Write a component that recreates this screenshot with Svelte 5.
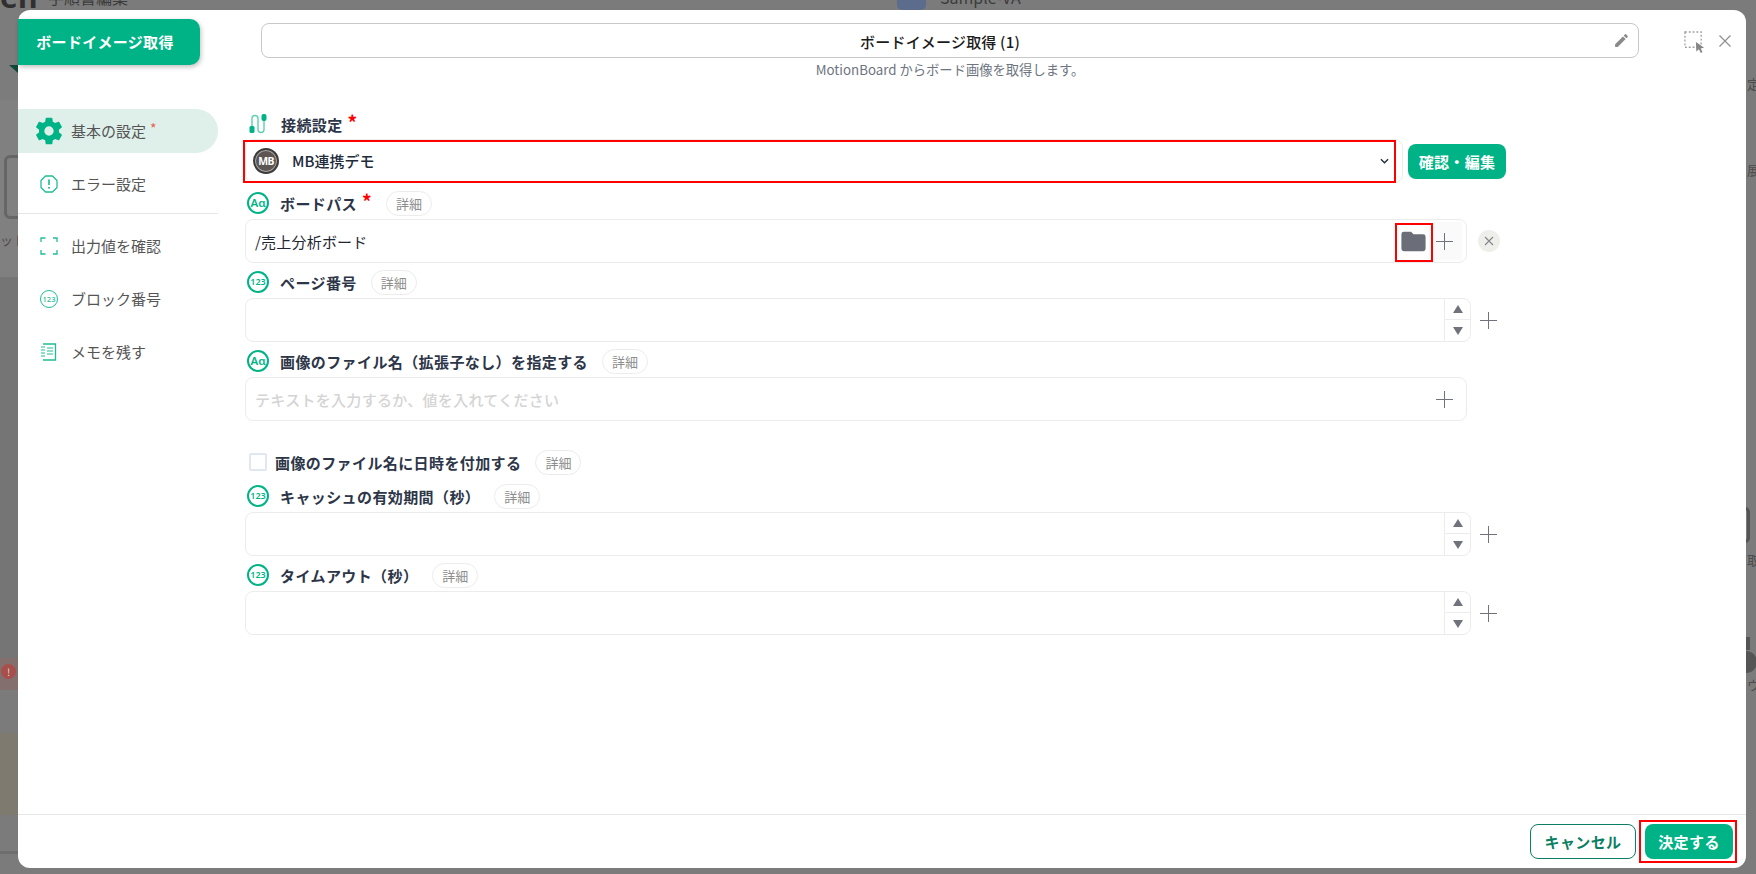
<script lang="ts">
  const sideItems = [
    { id: 'error', label: 'エラー設定' },
    { id: 'output', label: '出力値を確認' },
    { id: 'block', label: 'ブロック番号' },
    { id: 'memo', label: 'メモを残す' }
  ]
</script>

<div class="page">
  <div class="behind">
    <span class="bg-band top-left"></span>
    <span class="bg-band mid-left"></span>
    <span class="bg-band low-left"></span>
    <span class="bg-band band-b"></span>
    <span class="bg-yellow"></span>
    <span class="bg-rule-low"></span>
    <span class="bg-logo">en</span>
    <span class="bg-crumb">手順書編集</span>
    <span class="bg-avatar"></span>
    <span class="bg-flow">Sample-VA</span>
    <span class="bg-tri"></span>
    <span class="bg-bubble"></span>
    <span class="bg-note left">ット</span>
    <span class="bg-note r1">定</span>
    <span class="bg-note r2">展</span>
    <span class="bg-doc"></span>
    <span class="bg-note r3">取</span>
    <span class="bg-lock"></span>
    <span class="bg-round"></span>
    <span class="bg-note r4">ウ</span>
    <span class="bg-err">!</span>
  </div>

  <div class="modal">
    <header class="head">
      <div class="badge">ボードイメージ取得</div>
      <div class="title-col">
        <div class="title-box">
          <span>ボードイメージ取得 (1)</span>
          <svg class="pencil" viewBox="0 0 24 24" aria-hidden="true"><path d="M3 17.25V21h3.75L17.81 9.94l-3.75-3.75L3 17.25zM20.71 7.04a1 1 0 0 0 0-1.41l-2.34-2.34a1 1 0 0 0-1.41 0l-1.83 1.83 3.75 3.75 1.83-1.83z" /></svg>
        </div>
        <p class="subtitle">MotionBoard からボード画像を取得します。</p>
      </div>
      <div class="tools">
        <svg class="select-tool" viewBox="0 0 22 23" aria-hidden="true">
          <rect x="1" y="1" width="17" height="16" fill="none" stroke="#a0a0a0" stroke-width="1.4" stroke-dasharray="2 2" />
          <path d="M12.500 11.500l8.500 6-3.600.9 2 3.600-1.800.9-2-3.700-2.700 2.300z" fill="#858585" />
        </svg>
        <svg class="close-tool" viewBox="0 0 12 12" aria-hidden="true"><path d="M0.500 0.500l11 11M11.500 0.500l-11 11" stroke="#8f8f8f" stroke-width="1.200" fill="none" /></svg>
      </div>
    </header>

    <div class="body">
      <nav class="side">
        <div class="side-item active">
          <svg class="gear" viewBox="0 0 24 24" aria-hidden="true"><path d="M19.43 12.98c.04-.32.07-.64.07-.98s-.03-.66-.07-.98l2.11-1.65c.19-.15.24-.42.12-.64l-2-3.46c-.12-.22-.39-.3-.61-.22l-2.49 1c-.52-.4-1.08-.73-1.69-.98l-.38-2.65A.49.49 0 0 0 14 2h-4c-.25 0-.46.18-.49.42l-.38 2.65c-.61.25-1.17.59-1.69.98l-2.49-1c-.23-.09-.49 0-.61.22l-2 3.46c-.13.22-.07.49.12.64l2.11 1.65c-.04.32-.07.65-.07.98s.03.66.07.98l-2.11 1.65c-.19.15-.24.42-.12.64l2 3.46c.12.22.39.3.61.22l2.49-1c.52.4 1.08.73 1.69.98l.38 2.65c.03.24.24.42.49.42h4c.25 0 .46-.18.49-.42l.38-2.65c.61-.25 1.17-.59 1.69-.98l2.49 1c.23.09.49 0 .61-.22l2-3.46c.12-.22.07-.49-.12-.64l-2.11-1.65zM12 15.500a3.500 3.500 0 1 1 0-7 3.500 3.500 0 0 1 0 7z" /></svg>
          <span>基本の設定</span><i class="side-star">*</i>
        </div>
        {#each sideItems as item (item.id)}
          <div class="side-item {item.id}">
            {#if item.id === 'error'}
              <svg viewBox="0 0 18 18" aria-hidden="true"><path d="M5.500 1h7L17 5.500v7L12.500 17h-7L1 12.500v-7z" fill="none" stroke="#1fbd95" stroke-width="1.300" stroke-linejoin="round" /><path d="M9 4.600v5.400" stroke="#1fbd95" stroke-width="1.700" /><circle cx="9" cy="12.800" r="1" fill="#1fbd95" /></svg>
            {:else if item.id === 'output'}
              <svg viewBox="0 0 18 18" aria-hidden="true"><path d="M1 5V1h4.500M13 1h4v4M17 13v4h-4M5.500 17H1v-4" fill="none" stroke="#1fbd95" stroke-width="1.300" /></svg>
            {:else if item.id === 'block'}
              <span class="num-icon">123</span>
            {:else}
              <svg viewBox="0 0 18 18" aria-hidden="true"><path d="M3 1h12.500v16H3" fill="none" stroke="#1fbd95" stroke-width="1.300" /><path d="M1 4h4M1 7h4M1 10h4M1 13h4M7 5h6M7 8h6M7 11h6" stroke="#1fbd95" stroke-width="1.200" /></svg>
            {/if}
            <span>{item.label}</span>
          </div>
          {#if item.id === 'error'}<hr class="side-rule" />{/if}
        {/each}
      </nav>

      <main class="form">
        <div class="label-row first">
          <svg class="plug" viewBox="0 0 20 22" aria-hidden="true">
            <path d="M4 14V5.500a3 3 0 0 1 6 0v11a3 3 0 0 0 6 0V8" fill="none" stroke="#5fd0b0" stroke-width="1.400" />
            <rect x="1.500" y="13" width="5" height="7" rx="1.500" fill="#00b386" />
            <rect x="13.500" y="1" width="5" height="7" rx="2" fill="#00b386" />
          </svg>
          <b>接続設定</b><i class="star">*</i>
        </div>
        <div class="select-row">
          <div class="select-box">
            <span class="mb-logo">MB</span>
            <span class="select-text">MB連携デモ</span>
            <svg class="chev" viewBox="0 0 10 6" aria-hidden="true"><path d="M1 1l4 4 4-4" fill="none" stroke="#222b3a" stroke-width="1.500" /></svg>
          </div>
          <button class="confirm-btn" type="button">確認・編集</button>
        </div>

        <div class="label-row">
          <span class="type-icon text">Aɑ</span><b>ボードパス</b><i class="star">*</i><span class="detail">詳細</span>
        </div>
        <div class="field-row">
          <div class="input-box wide">
            <span class="value">/売上分析ボード</span>
            <span class="folder-slot">
              <svg viewBox="0 0 24 24" aria-hidden="true"><path d="M10 4H4a2 2 0 0 0-2 2v12a2 2 0 0 0 2 2h16a2 2 0 0 0 2-2V8a2 2 0 0 0-2-2h-8l-2-2z" /></svg>
            </span>
            <span class="plus-slot shaded"><span class="plus"></span></span>
          </div>
          <span class="clear-btn">
            <svg viewBox="0 0 10 10" aria-hidden="true"><path d="M1 1l8 8M9 1l-8 8" stroke="#85858b" stroke-width="1.100" /></svg>
          </span>
        </div>

        <div class="label-row">
          <span class="type-icon">123</span><b>ページ番号</b><span class="detail">詳細</span>
        </div>
        <div class="field-row">
          <div class="input-box num">
            <span class="spin"><span class="tri up"></span><span class="tri down"></span></span>
          </div>
          <span class="plus outer"></span>
        </div>

        <div class="label-row">
          <span class="type-icon text">Aɑ</span><b>画像のファイル名（拡張子なし）を指定する</b><span class="detail">詳細</span>
        </div>
        <div class="field-row">
          <div class="input-box wide">
            <span class="placeholder">テキストを入力するか、値を入れてください</span>
            <span class="plus-slot"><span class="plus"></span></span>
          </div>
        </div>

        <div class="check-row">
          <span class="check"></span><b>画像のファイル名に日時を付加する</b><span class="detail">詳細</span>
        </div>

        <div class="label-row">
          <span class="type-icon">123</span><b>キャッシュの有効期間（秒）</b><span class="detail">詳細</span>
        </div>
        <div class="field-row">
          <div class="input-box num">
            <span class="spin"><span class="tri up"></span><span class="tri down"></span></span>
          </div>
          <span class="plus outer"></span>
        </div>

        <div class="label-row">
          <span class="type-icon">123</span><b>タイムアウト（秒）</b><span class="detail">詳細</span>
        </div>
        <div class="field-row">
          <div class="input-box num">
            <span class="spin"><span class="tri up"></span><span class="tri down"></span></span>
          </div>
          <span class="plus outer"></span>
        </div>
      </main>
    </div>

    <footer class="foot">
      <button class="cancel" type="button">キャンセル</button>
      <button class="ok" type="button">決定する</button>
    </footer>

    <span class="mark mark-select"></span>
    <span class="mark mark-folder"></span>
    <span class="mark mark-ok"></span>
  </div>
</div>

<style>
  :global(body) {
    margin: 0;
    font-family: "Noto Sans CJK JP", "Noto Sans", sans-serif;
    color: #222b3a;
  }

  .page {
    position: relative;
    width: 1756px;
    height: 874px;
    overflow: hidden;
    background: #7b7b7b;
  }

  .behind span {
    position: absolute;
  }

  .bg-logo {
    left: 0;
    top: -24px;
    font: 700 30px "Noto Sans", sans-serif;
    color: #303030;
  }

  .bg-crumb {
    left: 48px;
    top: -15px;
    font-size: 16px;
    color: #3c3c3c;
  }

  .bg-avatar {
    left: 897px;
    top: -14px;
    width: 29px;
    height: 24px;
    border-radius: 5px;
    background: #5b6c8c;
  }

  .bg-flow {
    left: 940px;
    top: -15px;
    font-size: 16px;
    color: #3c3c3c;
  }

  .top-left {
    left: 0;
    top: 0;
    width: 18px;
    height: 100px;
    background: #7c7c7c;
  }

  .mid-left {
    left: 0;
    top: 100px;
    width: 18px;
    height: 177px;
    background: #808080;
  }

  .low-left {
    left: 0;
    top: 277px;
    width: 18px;
    height: 381px;
    background: #757575;
  }

  .bg-tri {
    left: 9px;
    top: 65px;
    width: 0;
    height: 0;
    border-top: 8px solid #0e4a3a;
    border-left: 9px solid transparent;
  }

  .bg-bubble {
    box-sizing: border-box;
    left: 4px;
    top: 155px;
    width: 20px;
    height: 64px;
    border: 3px solid #666;
    border-radius: 6px;
  }

  .bg-note {
    font-size: 13px;
    color: #4c4c4c;
  }

  .left {
    left: 0;
    top: 230px;
  }

  .r1 {
    left: 1747px;
    top: 74px;
  }

  .r2 {
    left: 1747px;
    top: 160px;
  }

  .bg-doc {
    box-sizing: border-box;
    left: 1735px;
    top: 507px;
    width: 15px;
    height: 36px;
    border: 3px solid #555;
    border-radius: 5px;
  }

  .r3 {
    left: 1747px;
    top: 550px;
  }

  .bg-lock {
    left: 1746px;
    top: 637px;
    width: 4px;
    height: 13px;
    background: #555;
  }

  .bg-round {
    left: 1735px;
    top: 651px;
    width: 22px;
    height: 22px;
    border-radius: 50%;
    background: #555;
  }

  .r4 {
    left: 1747px;
    top: 675px;
  }

  .band-b {
    left: 0;
    top: 658px;
    width: 18px;
    height: 32px;
    background: #846f6f;
  }

  .bg-err {
    left: 1px;
    top: 664px;
    width: 15px;
    height: 15px;
    border-radius: 50%;
    background: #a84f4b;
    color: #ddd;
    font-size: 10px;
    line-height: 15px;
    text-align: center;
  }

  .bg-yellow {
    left: 0;
    top: 733px;
    width: 18px;
    height: 82px;
    background: #7e7a70;
  }

  .bg-rule-low {
    left: 0;
    top: 851px;
    width: 18px;
    height: 3px;
    background: #6e6e6e;
  }

  .modal {
    position: absolute;
    left: 18px;
    top: 10px;
    width: 1728px;
    height: 858px;
    display: flex;
    flex-direction: column;
    border-radius: 12px;
    background: #fff;
  }

  .head {
    display: flex;
    align-items: flex-start;
    height: 85px;
    flex: none;
  }

  .badge {
    box-sizing: border-box;
    width: 182px;
    height: 46px;
    margin-top: 9px;
    padding-right: 8px;
    border-radius: 0 10px 10px 0;
    background: #00b386;
    box-shadow: 1px 2px 5px rgba(0, 0, 0, 0.25);
    color: #fff;
    font-size: 15px;
    font-weight: 700;
    letter-spacing: 0.300px;
    line-height: 46px;
    text-align: center;
  }

  .title-col {
    width: 1378px;
    margin: 13px 0 0 61px;
  }

  .title-box {
    box-sizing: border-box;
    position: relative;
    height: 35px;
    padding-right: 20px;
    border: 1px solid #c8c8c8;
    border-radius: 8px;
    font-size: 15px;
    font-weight: 500;
    letter-spacing: 0.200px;
    line-height: 35px;
    text-align: center;
    color: #1b1b1b;
  }

  .pencil {
    position: absolute;
    right: 8px;
    top: 8px;
    width: 17px;
    height: 17px;
    fill: #8a8a8a;
  }

  .subtitle {
    margin: 3px 0 0;
    font-size: 13.300px;
    line-height: 18px;
    text-align: center;
    color: #6e7480;
  }

  .tools {
    display: flex;
    align-items: flex-start;
    gap: 14px;
    margin: 21px 0 0 45px;
  }

  .select-tool {
    width: 21px;
    height: 22px;
  }

  .close-tool {
    width: 12px;
    height: 12px;
    margin-top: 4px;
  }

  .body {
    display: flex;
    flex: 1;
    min-height: 0;
  }

  .side {
    flex: none;
    width: 200px;
    padding-top: 14px;
  }

  .side-item {
    display: flex;
    align-items: center;
    gap: 13px;
    height: 44px;
    padding-left: 22px;
    margin-bottom: 9px;
    font-size: 15px;
    color: #555;
  }

  .side-item > span {
    margin-top: -1px;
  }

  .side-item svg,
  .side-item .num-icon {
    flex: none;
    width: 18px;
    height: 18px;
  }

  .side-item.active {
    gap: 6px;
    padding-left: 15px;
    border-radius: 0 22px 22px 0;
    background: #dff0ea;
  }

  .side-item.active .gear {
    width: 32px;
    height: 32px;
    fill: #00b386;
  }

  .side-star {
    margin: -6px 0 0 -2px;
    color: #e8604f;
    font-style: normal;
    font-size: 14px;
  }

  .side-rule {
    height: 1px;
    margin: -2px 0 10px;
    border: 0;
    background: #e6e6e6;
  }

  .num-icon {
    box-sizing: border-box;
    border: 1px solid #1fbd95;
    border-radius: 50%;
    color: #1fbd95;
    font: 500 7.500px/16px "Noto Sans", sans-serif;
    text-align: center;
  }

  .form {
    flex: none;
    width: 1300px;
    padding: 10px 0 0 27px;
  }

  .label-row,
  .check-row {
    display: flex;
    align-items: center;
    height: 30px;
    margin: 4px 0 1px;
    font-size: 15px;
    letter-spacing: 0.400px;
    color: #2d3648;
  }

  .label-row b,
  .check-row b {
    font-weight: 700;
  }

  .label-row.first {
    margin-bottom: 2px;
  }

  .plug {
    width: 20px;
    height: 22px;
    margin: 0 13px 0 3px;
  }

  .star {
    margin: -6px 0 0 5px;
    color: #f00;
    font-style: normal;
    font-weight: 700;
    font-size: 19px;
    line-height: 1;
  }

  .type-icon {
    box-sizing: border-box;
    flex: none;
    width: 22px;
    height: 22px;
    margin: 0 11px 0 2px;
    border: 2px solid #00b386;
    border-radius: 50%;
    color: #00b386;
    font: 600 9px/18px "Noto Sans", sans-serif;
    letter-spacing: 0;
    text-align: center;
  }

  .type-icon.text {
    font-size: 11.500px;
  }

  .detail {
    box-sizing: border-box;
    height: 25px;
    margin-left: 14px;
    padding: 0 9px;
    border: 1px solid #ececec;
    border-radius: 13px;
    color: #8d8d8d;
    font-size: 13px;
    letter-spacing: 0;
    line-height: 23px;
  }

  .select-row {
    display: flex;
    align-items: center;
    gap: 5px;
    height: 40px;
    margin-bottom: 7px;
  }

  .select-box {
    box-sizing: border-box;
    display: flex;
    align-items: center;
    width: 1158px;
    height: 44px;
    padding: 0 13px 0 7px;
    border: 1px solid #ececec;
    border-radius: 8px;
    font-size: 15px;
  }

  .mb-logo {
    box-sizing: border-box;
    flex: none;
    width: 26px;
    height: 26px;
    border: 2px solid #3c3c3c;
    border-radius: 50%;
    background: #5d5552;
    box-shadow: inset 0 0 0 1px #a9a5a3;
    color: #fff;
    font: 700 10.500px/22px "Noto Sans", sans-serif;
    letter-spacing: -0.800px;
    text-align: center;
  }

  .select-text {
    flex: 1;
    margin: -2px 0 0 13px;
    font-weight: 500;
  }

  .chev {
    width: 9px;
    height: 6px;
  }

  .confirm-btn {
    width: 98px;
    height: 35px;
    padding: 0;
    border: 0;
    border-radius: 8px;
    background: #00b386;
    color: #fff;
    font: 700 15px "Noto Sans CJK JP", sans-serif;
    letter-spacing: 0.300px;
  }

  .field-row {
    display: flex;
    align-items: center;
    height: 44px;
  }

  .input-box {
    box-sizing: border-box;
    position: relative;
    display: flex;
    align-items: center;
    height: 44px;
    padding-left: 9px;
    border: 1px solid #ececec;
    border-radius: 8px;
    font-size: 15px;
  }

  .input-box.wide {
    width: 1222px;
  }

  .input-box.num {
    width: 1226px;
    justify-content: flex-end;
    padding-left: 0;
  }

  .value {
    flex: 1;
    color: #1f2733;
    letter-spacing: 0.200px;
  }

  .placeholder {
    flex: 1;
    color: #d4d4d4;
    font-weight: 500;
    letter-spacing: 0.300px;
  }

  .folder-slot {
    display: flex;
    align-items: center;
    justify-content: center;
    width: 39px;
    height: 38px;
  }

  .folder-slot svg {
    width: 29px;
    height: 29px;
    fill: #6b6e78;
  }

  .plus-slot {
    display: flex;
    align-items: center;
    padding-left: 3px;
    box-sizing: border-box;
    width: 29px;
    height: 38px;
    margin-right: 4px;
  }

  .plus-slot.shaded {
    background: #fafafa;
  }

  .plus {
    position: relative;
    display: block;
    width: 17px;
    height: 17px;
  }

  .plus::before,
  .plus::after {
    content: "";
    position: absolute;
    background: #70737c;
  }

  .plus::before {
    left: 0;
    right: 0;
    top: 8px;
    height: 1px;
  }

  .plus::after {
    top: 0;
    bottom: 0;
    left: 8px;
    width: 1px;
  }

  .plus.outer {
    margin-left: 9px;
  }

  .clear-btn {
    display: flex;
    align-items: center;
    justify-content: center;
    width: 22px;
    height: 22px;
    margin-left: 11px;
    border-radius: 50%;
    background: #eeeeea;
  }

  .clear-btn svg {
    width: 10px;
    height: 10px;
  }

  .spin {
    box-sizing: border-box;
    display: grid;
    grid-template-rows: 1fr 1fr;
    width: 26px;
    height: 42px;
    border-left: 1px solid #ececec;
  }

  .tri {
    display: flex;
    align-items: center;
    justify-content: center;
  }

  .tri.up {
    border-bottom: 1px solid #ececec;
  }

  .tri::before {
    content: "";
    width: 0;
    height: 0;
    border-left: 5.500px solid transparent;
    border-right: 5.500px solid transparent;
  }

  .tri.up::before {
    border-bottom: 8px solid #70737c;
  }

  .tri.down::before {
    border-top: 8px solid #70737c;
  }

  .check-row {
    margin: 26px 0 0;
    padding-left: 4px;
  }

  .check {
    box-sizing: border-box;
    width: 18px;
    height: 18px;
    margin-right: 8px;
    border: 2px solid #e1e7f0;
    border-radius: 2px;
  }

  .foot {
    display: flex;
    flex: none;
    justify-content: flex-end;
    align-items: center;
    gap: 9px;
    height: 53px;
    padding-right: 13px;
    border-top: 1px solid #e6e6e6;
  }

  .cancel,
  .ok {
    height: 35px;
    padding: 0;
    border-radius: 8px;
    font: 700 15px "Noto Sans CJK JP", sans-serif;
    letter-spacing: 0.400px;
  }

  .cancel {
    width: 106px;
    border: 1px solid #0a7f63;
    background: #fff;
    color: #0a7f63;
  }

  .ok {
    width: 88px;
    border: 0;
    background: #00b386;
    color: #fff;
  }

  .mark {
    position: absolute;
    box-sizing: border-box;
    border: 2px solid #f00;
    pointer-events: none;
  }

  .mark-select {
    left: 225px;
    top: 130px;
    width: 1153px;
    height: 43px;
  }

  .mark-folder {
    left: 1377px;
    top: 213px;
    width: 38px;
    height: 39px;
  }

  .mark-ok {
    left: 1621px;
    top: 810px;
    width: 98px;
    height: 43px;
  }
</style>
